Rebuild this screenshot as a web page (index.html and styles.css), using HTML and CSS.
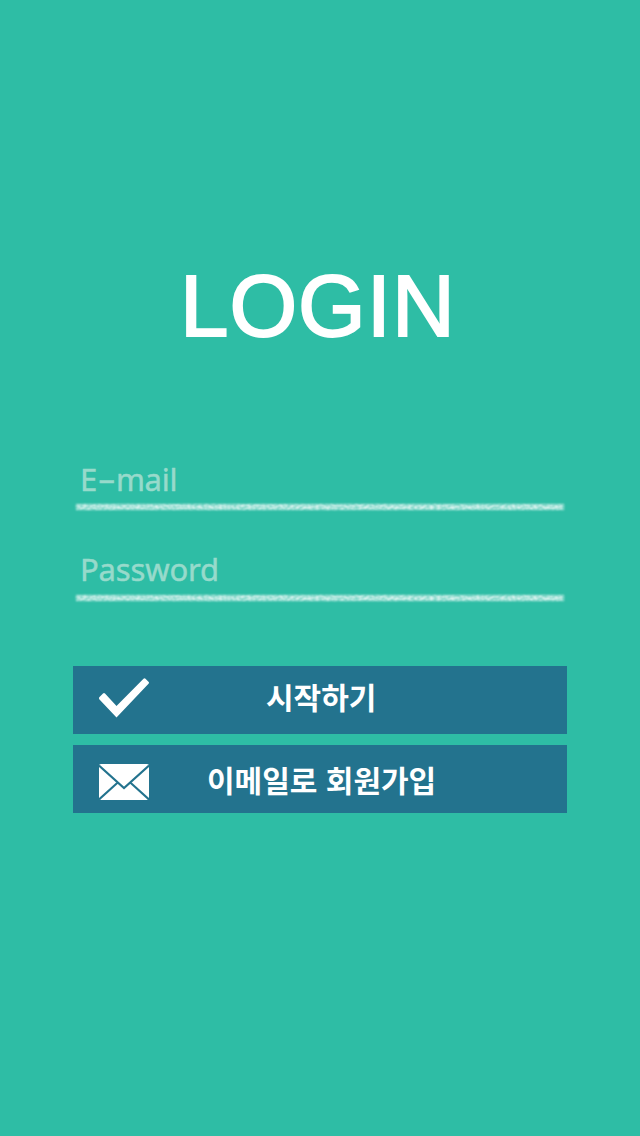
FILE: index.html
```html
<!DOCTYPE html>
<html lang="ko">
<head>
<meta charset="utf-8">
<title>Login</title>
<link rel="stylesheet" href="styles.css">
</head>
<body>
<main class="screen">
  <h1 class="title">LOGIN</h1>
  <form class="form">
    <label class="field">
      <span class="label email">E<span class="dash">-</span>mail</span>
      <svg class="rule" width="494" height="12" viewBox="0 0 494 12">
        <defs>
          <filter id="chalk" x="0" y="0" width="494" height="12" filterUnits="userSpaceOnUse" color-interpolation-filters="sRGB">
            <feTurbulence type="fractalNoise" baseFrequency="0.28 0.35" numOctaves="1" seed="4" result="n"/>
            <feColorMatrix in="n" type="matrix" values="0 0 0 0 1  0 0 0 0 1  0 0 0 0 1  0.6 0 0 0 0.33" result="grain"/>
            <feGaussianBlur in="SourceGraphic" stdDeviation="1.3 0.9" result="soft"/>
            <feComposite in="soft" in2="grain" operator="in"/>
          </filter>
        </defs>
        <rect x="3" y="3" width="488" height="6" fill="#fff" filter="url(#chalk)"/>
      </svg>
    </label>
    <label class="field">
      <span class="label password">Password</span>
      <svg class="rule" width="494" height="12" viewBox="0 0 494 12">
        <rect x="3" y="3" width="488" height="6" fill="#fff" filter="url(#chalk)"/>
      </svg>
    </label>
    <div class="actions">
      <button class="button" type="button">
        <svg class="icon" width="50" height="40" viewBox="0 0 50 40"><path d="M0.5 21.5Q-0.5 20 0.5 19L4 15.5Q5 14.5 6 15.5L17.5 28 44.5 0.7Q45.5 -0.3 46.5 0.7L49.5 3.7Q50.5 4.7 49.5 5.7L17.5 39.5Z" fill="#fff"/></svg>
        <span class="caption start">시작하기</span>
      </button>
      <button class="button" type="button">
        <svg class="icon mail" width="50" height="36" viewBox="0 0 50 36"><rect width="50" height="36" rx="2" fill="#fff"/><path d="M0 1.5 25 24 50 1.5M0 35.5 18.5 18.8M50 35.5 31.5 18.8" fill="none" stroke="#23738e" stroke-width="2.1"/></svg>
        <span class="caption join">이메일로 회원가입</span>
      </button>
    </div>
  </form>
</main>
</body>
</html>
```
FILE: styles.css
```css
* { box-sizing: border-box; }
body { margin: 0; background: #2ebda5; }
.screen { width: 640px; height: 1136px; padding-top: 256px; overflow: hidden; }
.title {
  margin: 0 0 0 180px;
  height: 203px;
  font: 400 87px/100px "Liberation Sans", Arial, sans-serif;
  letter-spacing: 1px;
  color: #fff;
  -webkit-text-stroke: 2px #fff;
}
.form { width: 494px; margin: 0 auto; }
.field { display: flex; flex-direction: column; height: 91px; }
.label {
  height: 42px;
  padding-left: 7px;
  font: 400 31px/40px "Noto Sans", "Open Sans", sans-serif;
  letter-spacing: -0.15px;
  color: #97dacb;
  -webkit-text-stroke: 0.5px #97dacb;
  white-space: nowrap;
}
.dash { display: inline-block; width: 19px; transform: translateY(-1.5px) scaleX(1.8); text-align: center; }
.email { letter-spacing: -0.3px; }
.password { line-height: 38px; }
.rule { display: block; }
.actions { display: flex; flex-direction: column; gap: 11px; padding-top: 25px; }
.button {
  display: flex;
  align-items: center;
  height: 68px;
  width: 494px;
  padding: 0 0 0 26px;
  border: 0;
  background: #23738e;
  color: #fff;
}
.icon { display: block; flex: none; margin-top: -4px; }
.mail { margin-top: 6px; }
.caption { font: 700 30px/40px "Noto Sans CJK KR", sans-serif; white-space: nowrap; }
.start { margin-left: 117px; margin-top: -8px; }
.join { margin-left: 58px; margin-top: 0; }
```
